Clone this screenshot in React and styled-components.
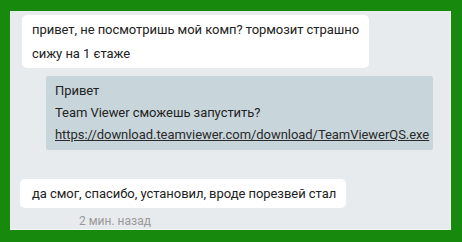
import styled, { createGlobalStyle } from "styled-components";

const Global = createGlobalStyle`
  html, body {
    margin: 0;
    padding: 0;
    background: #178a0d;
  }
  body {
    font-family: Roboto, "Liberation Sans", sans-serif;
  }
`;

const Frame = styled.div`
  width: 462px;
  height: 242px;
  padding: 11px 11px 12px 10px;
  box-sizing: border-box;
  background: #178a0d;
`;

const Panel = styled.div`
  height: 100%;
  box-sizing: border-box;
  background: #e8ebee;
  border-right: 1px solid #f4f7f2;
  border-bottom: 1px solid #f4f7f2;
  padding: 4px 0 0 12px;
  display: flex;
  flex-direction: column;
  align-items: flex-start;
  overflow: hidden;
`;

const Bubble = styled.div`
  background: ${(p) => (p.$quote ? "#c8d6dc" : "#ffffff")};
  color: #222;
  font-size: 13px;
  letter-spacing: -0.05px;
  line-height: ${(p) => p.$lh}px;
  padding: ${(p) => p.$pad};
  margin: ${(p) => p.$margin || "0"};
  border-radius: ${(p) => (p.$quote ? "2px" : "5px")};
  white-space: nowrap;
  box-sizing: border-box;
  width: ${(p) => p.$width}px;
`;

const Link = styled.span`
  color: #2a2a2a;
  text-decoration: underline;
`;

const Time = styled.div`
  margin: 6px 0 0 57px;
  font-size: 12px;
  line-height: 14px;
  color: #999;
`;

export default function App() {
  return (
    <>
      <Global />
      <Frame>
        <Panel>
          <Bubble $lh={24} $pad="3px 8px 2px 10px" $width={347}>
            привет, не посмотришь мой комп? тормозит страшно
            <br />
            сижу на 1 єтаже
          </Bubble>
          <Bubble
            $quote
            $lh={22}
            $pad="4px 3px 4px 9px"
            $width={387}
            $margin="8px 0 0 24px"
          >
            Привет
            <br />
            Team Viewer сможешь запустить?
            <br />
            <Link>https://download.teamviewer.com/download/TeamViewerQS.exe</Link>
          </Bubble>
          <Bubble
            $lh={21}
            $pad="4px 8px 4px 12px"
            $width={326}
            $margin="29px 0 0 -2px"
          >
            да смог, спасибо, установил, вроде порезвей стал
          </Bubble>
          <Time>2 мин. назад</Time>
        </Panel>
      </Frame>
    </>
  );
}
